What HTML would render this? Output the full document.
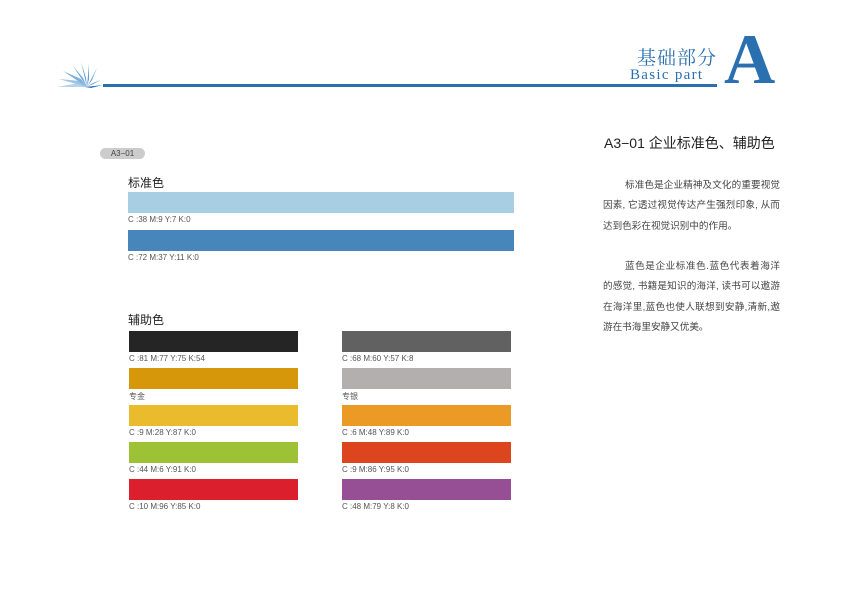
<!DOCTYPE html>
<html><head><meta charset="utf-8"><style>
body{margin:0;width:841px;height:600px;background:#fff;position:relative;overflow:hidden;font-family:"Liberation Sans","Noto Sans CJK SC",sans-serif;}
.a{position:absolute}
.lbl{position:absolute;font-size:8px;color:#555;white-space:nowrap}
.p{position:absolute;left:603px;width:177px;font-size:9.6px;line-height:20.3px;color:#444}
.p div{white-space:nowrap;text-align:justify;text-align-last:justify;text-justify:inter-character;height:20.3px}
.p div.l{text-align-last:left}
</style></head><body>
<svg class="a" style="left:55px;top:60px" width="50" height="30" viewBox="0 0 50 30">
<path d="M32 27 L2 27 L24 23Z" fill="#b5d3ea"/>
<path d="M32 27 L4 19 L25 21Z" fill="#9cc4e4"/>
<path d="M32 27 L8 11 L26 19Z" fill="#7fb1dc"/>
<path d="M32 27 L18 6 L28 18Z" fill="#6aa3d5"/>
<path d="M32 27 L26 2 L31 18Z" fill="#5a98cf"/>
<path d="M32 27 L34 4 L34 19Z" fill="#5a98cf"/>
<path d="M32 27 L42 8 L37 20Z" fill="#6aa3d5"/>
<path d="M32 27 L46 20 L38 23Z" fill="#4f8fc8"/>
<path d="M30 27 L48 25 L36 28Z" fill="#2f75b5"/>
</svg>
<div class="a" style="left:103px;top:84px;width:614px;height:3px;background:#2a6fb0"></div>
<div class="a" style="left:637px;top:46px;font-family:'Noto Serif CJK SC',serif;font-size:19px;line-height:22px;color:#2a6fb0;letter-spacing:1px">基础部分</div>
<div class="a" style="left:630px;top:68px;font-family:'Liberation Serif',serif;font-size:15px;line-height:15px;color:#2a6fb0;letter-spacing:1.3px">Basic part</div>
<div class="a" style="left:724px;top:25px;font-family:'Liberation Serif',serif;font-weight:bold;font-size:71px;line-height:71px;color:#2a6fb0">A</div>
<div class="a" style="left:100px;top:148px;width:45px;height:11px;border-radius:6px;background:#ccc;font-size:8px;line-height:11px;text-align:center;color:#444">A3−01</div>
<div class="a" style="left:128px;top:174px;font-size:12px;color:#222">标准色</div>
<div class="a" style="left:128px;top:192px;width:386px;height:21px;background:#a8cee4"></div>
<div class="lbl" style="left:128px;top:215px">C :38 M:9 Y:7 K:0</div>
<div class="a" style="left:128px;top:230px;width:386px;height:21px;background:#4686bb"></div>
<div class="lbl" style="left:128px;top:253px">C :72 M:37 Y:11 K:0</div>
<div class="a" style="left:128px;top:311px;font-size:12px;color:#222">辅助色</div>

<div class="a" style="left:129px;top:331px;width:169px;height:21px;background:#252525"></div>
<div class="lbl" style="left:129px;top:354px">C :81 M:77 Y:75 K:54</div>
<div class="a" style="left:129px;top:368px;width:169px;height:21px;background:#d6980a"></div>
<div class="lbl" style="left:129px;top:391px">专金</div>
<div class="a" style="left:129px;top:405px;width:169px;height:21px;background:#ebbb2e"></div>
<div class="lbl" style="left:129px;top:428px">C :9 M:28 Y:87 K:0</div>
<div class="a" style="left:129px;top:442px;width:169px;height:21px;background:#9dc236"></div>
<div class="lbl" style="left:129px;top:465px">C :44 M:6 Y:91 K:0</div>
<div class="a" style="left:129px;top:479px;width:169px;height:21px;background:#dc1f2c"></div>
<div class="lbl" style="left:129px;top:502px">C :10 M:96 Y:85 K:0</div>

<div class="a" style="left:342px;top:331px;width:169px;height:21px;background:#616161"></div>
<div class="lbl" style="left:342px;top:354px">C :68 M:60 Y:57 K:8</div>
<div class="a" style="left:342px;top:368px;width:169px;height:21px;background:#b4afaf"></div>
<div class="lbl" style="left:342px;top:391px">专银</div>
<div class="a" style="left:342px;top:405px;width:169px;height:21px;background:#ec9a26"></div>
<div class="lbl" style="left:342px;top:428px">C :6 M:48 Y:89 K:0</div>
<div class="a" style="left:342px;top:442px;width:169px;height:21px;background:#dd451e"></div>
<div class="lbl" style="left:342px;top:465px">C :9 M:86 Y:95 K:0</div>
<div class="a" style="left:342px;top:479px;width:169px;height:21px;background:#964f95"></div>
<div class="lbl" style="left:342px;top:502px">C :48 M:79 Y:8 K:0</div>

<div class="a" style="left:604px;top:133px;font-size:14px;color:#222">A3−01 企业标准色、辅助色</div>
<div class="p" style="top:176px">
<div style="padding-left:22px">标准色是企业精神及文化的重要视觉</div>
<div>因素, 它透过视觉传达产生强烈印象, 从而</div>
<div class="l">达到色彩在视觉识别中的作用。</div>
</div>
<div class="p" style="top:257px">
<div style="padding-left:22px">蓝色是企业标准色.蓝色代表着海洋</div>
<div>的感觉, 书籍是知识的海洋, 读书可以遨游</div>
<div>在海洋里,蓝色也使人联想到安静,清新,遨</div>
<div class="l">游在书海里安静又优美。</div>
</div>
</body></html>
